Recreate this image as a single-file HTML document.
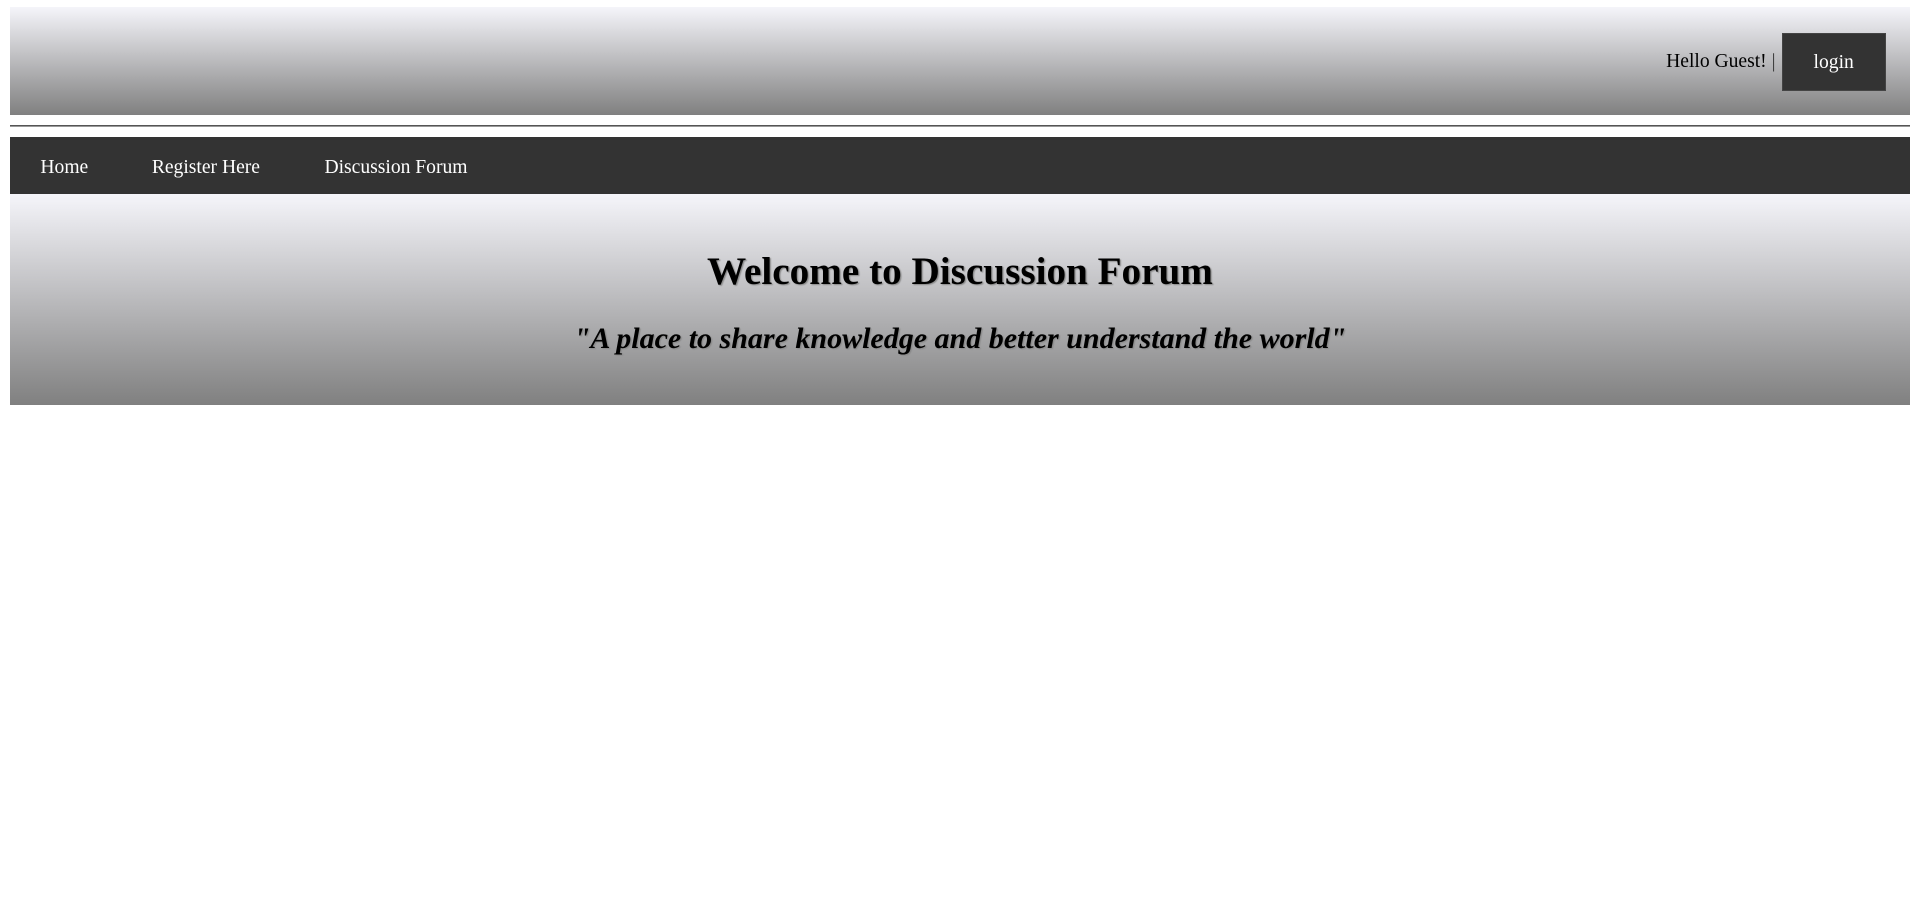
<!DOCTYPE html>
<html><head><meta charset="utf-8"><style>
html,body{margin:0;padding:0;background:#fff}
body{zoom:1.2245;font-family:"Liberation Serif",serif;font-size:16px;padding:0 8px;width:1552px}
.hdr{margin-top:6px;height:88px;background:linear-gradient(#f5f5fa,#808080);position:relative}
.hello{position:absolute;right:110px;top:36px;color:#000}
.hello span{color:#333}
.btn{position:absolute;right:20px;top:21px;width:85px;height:47px;background:#333;color:#fff;text-align:center;line-height:47px;border:1px solid #444;box-sizing:border-box}
.line{margin-top:8px;height:0;border-top:1px solid #555;border-bottom:1px solid #999}
.nav{margin-top:8px;height:47px;background:#333;color:#fff;line-height:50px}
.nav a{position:absolute;color:#fff;text-decoration:none}
.ban{height:172px;background:linear-gradient(#f5f5fa,#808080);text-align:center;overflow:hidden}
h1{margin:0;padding-top:44px;font-size:32px;line-height:40px;text-shadow:1px 1px 1px #888}
h2{margin:18px 0 0;font-size:24.5px;font-style:italic;line-height:32px;text-shadow:1px 1px 1px #888}
</style></head><body>
<div class="hdr"><div class="hello">Hello Guest! <span>|</span></div><div class="btn">login</div></div>
<div class="line"></div>
<div class="nav" style="position:relative"><a style="left:25px">Home</a><a style="left:116px">Register Here</a><a style="left:257px">Discussion Forum</a></div>
<div class="ban"><h1>Welcome to Discussion Forum</h1><h2>"A place to share knowledge and better understand the world"</h2></div>
</body></html>
